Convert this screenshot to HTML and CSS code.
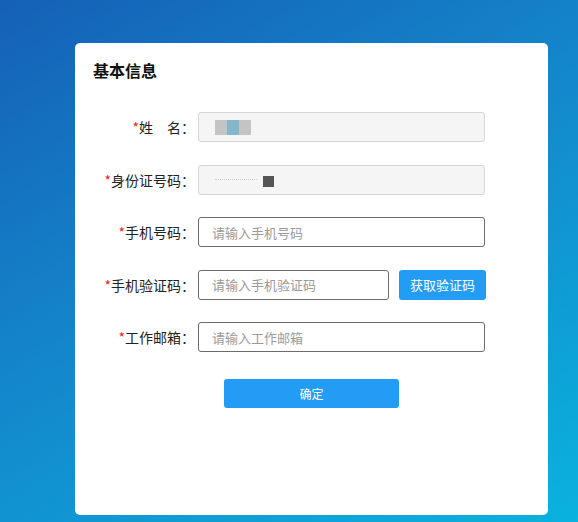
FILE: index.html
```html
<!DOCTYPE html>
<html lang="zh-CN">
<head>
<meta charset="utf-8">
<link rel="stylesheet" href="styles.css">
</head>
<body>
<div class="page">
  <div class="card">
    <h2 class="title">基本信息</h2>
    <form class="form">
      <div class="row">
        <label class="label"><span class="req">*</span>姓　名：</label>
        <div class="field disabled">
          <span class="mosaic">
            <span class="px g1"></span><span class="px b1"></span><span class="px g1"></span>
          </span>
        </div>
      </div>
      <div class="row">
        <label class="label"><span class="req">*</span>身份证号码：</label>
        <div class="field disabled">
          <span class="mosaic id">
            <span class="dots"></span><span class="px dk"></span>
          </span>
        </div>
      </div>
      <div class="row">
        <label class="label"><span class="req">*</span>手机号码：</label>
        <input class="field" type="text" placeholder="请输入手机号码">
      </div>
      <div class="row">
        <label class="label"><span class="req">*</span>手机验证码：</label>
        <div class="code">
          <input class="field short" type="text" placeholder="请输入手机验证码">
          <button type="button" class="btn small">获取验证码</button>
        </div>
      </div>
      <div class="row">
        <label class="label"><span class="req">*</span>工作邮箱：</label>
        <input class="field" type="text" placeholder="请输入工作邮箱">
      </div>
      <div class="actions">
        <button type="button" class="btn submit">确定</button>
      </div>
    </form>
  </div>
</div>
</body>
</html>
```
FILE: styles.css
```css
* { box-sizing: border-box; }
html, body { margin: 0; padding: 0; }
body {
  width: 578px;
  height: 522px;
  overflow: hidden;
  font-family: "Noto Sans CJK SC", "Microsoft YaHei", sans-serif;
  background: linear-gradient(150deg, #1560b6 0%, #1486cb 45%, #0ab2de 100%);
}
.page {
  padding: 43px 30px 0 75px;
}
.card {
  width: 473px;
  height: 472px;
  background: #fff;
  border-radius: 5px;
  padding: 15px 0 0 0;
}
.title {
  margin: 0 0 0 18px;
  font-size: 16px;
  font-weight: bold;
  line-height: 24px;
  color: #111;
}
.form {
  margin-top: 30px;
  display: flex;
  flex-direction: column;
  gap: 22.5px;
}
.row {
  display: flex;
  align-items: center;
  height: 30px;
}
.label {
  width: 120px;
  margin-right: 3px;
  text-align: right;
  font-size: 14px;
  color: #222;
  white-space: nowrap;
}
.req { color: #f01e1e; }
.field {
  width: 287px;
  height: 30px;
  border: 1px solid #6b6b6b;
  border-radius: 3px;
  padding: 0 13px;
  font-family: inherit;
  font-size: 13px;
  color: #333;
  background: #fff;
  outline: none;
}
.field::placeholder { color: #9a9a9a; }
.field.disabled {
  background: #f5f5f5;
  border-color: #d6d6d6;
  display: flex;
  align-items: center;
  padding: 0 0 0 16px;
}
.field.short { width: 191px; }
.mosaic {
  display: flex;
  align-items: center;
}
.px {
  display: inline-block;
  width: 12px;
  height: 15px;
}
.g1 { background: #c4c4c4; }
.b1 { background: #86b6ca; }
.mosaic.id { gap: 6px; }
.dots {
  display: inline-block;
  width: 42px;
  height: 1px;
  border-top: 1px dotted #d0d0d0;
}
.dk { background: #555; width: 11px; height: 11px; margin-top: 4px; }
.code {
  display: flex;
  align-items: center;
  gap: 10px;
}
.btn {
  border: none;
  border-radius: 3px;
  background: #229cf4;
  color: #fff;
  font-family: inherit;
  font-size: 13px;
  cursor: pointer;
}
.btn.small {
  width: 87px;
  height: 30px;
}
.actions {
  display: flex;
  justify-content: center;
  margin-top: 4px;
}
.btn.submit {
  width: 175px;
  height: 29px;
  font-size: 12px;
}
```
